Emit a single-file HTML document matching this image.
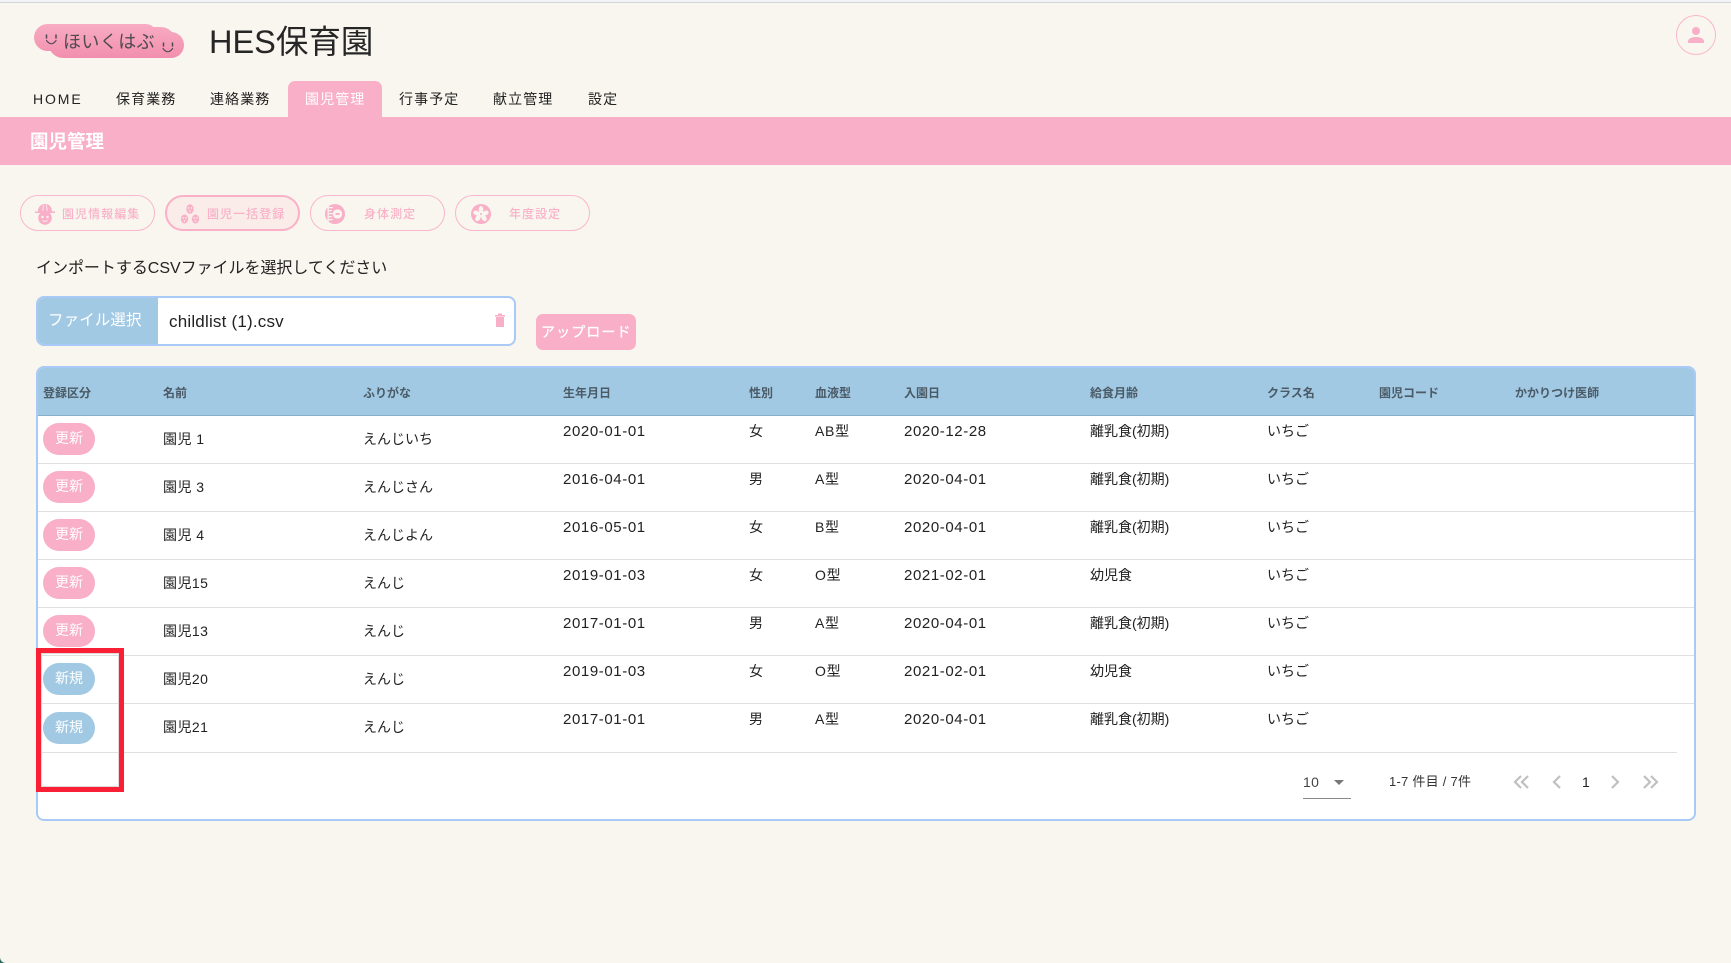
<!DOCTYPE html>
<html lang="ja"><head><meta charset="utf-8"><title>HES保育園</title>
<style>
html,body{margin:0;padding:0}
body{width:1731px;height:963px;overflow:hidden;position:relative;background:#f9f6ef;font-family:"Liberation Sans","Noto Sans CJK JP",sans-serif;color:#222}
.a,.a *{box-sizing:border-box}
.a{position:absolute;white-space:nowrap}
.nav{top:89px;height:20px;line-height:20px;font-size:14px;letter-spacing:1.1px;color:#222}
.btn{top:195px;width:135px;height:36px;border:1px solid #fab6cc;border-radius:18px}
.bt{top:205px;height:18px;line-height:18px;font-size:12px;letter-spacing:1.05px;font-weight:500;color:#f9b2c9}
.h{top:383px;height:20px;line-height:20px;font-size:12px;font-weight:700;color:#4a5a66}
.r{left:38px;width:1656px;height:48px;border-bottom:1px solid #e0e0e0}
.r span{position:absolute;height:20px;line-height:20px;font-size:14px;color:#222;white-space:nowrap}
.r .b{left:5px;top:7px;width:52px;height:32px;line-height:31px;border-radius:16px;text-align:center;color:#fff;background:#f8afc7;font-size:14px}
.r .n{background:#a2c9e3}
.r .c1{left:125px;top:13px;letter-spacing:.45px}.r .c2{left:325px;top:13px}
.r .c3{left:525px;top:6px;font-size:15px;letter-spacing:.6px}
.r .c4{left:711px;top:5px}.r .c5{left:777px;top:5px;letter-spacing:.7px}
.r .c6{left:866px;top:6px;font-size:15px;letter-spacing:.6px}
.r .c7{left:1052px;top:5px}.r .c8{left:1229px;top:5px}
</style></head><body>
<div class="a" style="left:0;top:0;width:1731px;height:2px;background:#f2f3f5"></div>
<div class="a" style="left:0;top:2px;width:1731px;height:1px;background:#d2d5dc"></div>

<svg class="a" style="left:30px;top:20px" width="160" height="42" viewBox="30 20 160 42">
<defs><linearGradient id="g" gradientUnits="userSpaceOnUse" x1="0" y1="24" x2="0" y2="58"><stop offset="0" stop-color="#f8acc3"/><stop offset="1" stop-color="#f28fae"/></linearGradient></defs>
<g fill="url(#g)"><rect x="34" y="24" width="60" height="27" rx="13.500"/><rect x="48" y="27" width="128" height="31" rx="15.500"/><rect x="60" y="24" width="96" height="20" rx="10"/><rect x="148" y="32" width="36" height="26" rx="13"/></g>
<g fill="none" stroke="#4f4a55" stroke-width="1.100" stroke-linecap="round"><path d="M46.500 40.500q4.800 6.500 9.600 0"/><path d="M163 48.500q4.800 6.500 9.600 0"/><path d="M46.500 35v3M56 35v3M163.500 43v3M172.500 43v3" stroke-width="1.500"/></g>
</svg>
<div class="a" style="left:63px;top:29px;height:26px;line-height:26px;font-size:18px;letter-spacing:.4px;color:#4f4a50">ほいくはぶ</div>
<div class="a" style="left:209px;top:21px;height:42px;line-height:42px;font-size:32.500px;color:#262626;font-weight:400">HES保育園</div>

<div class="a" style="left:1676px;top:15px;width:40px;height:40px;border:1px solid #fab6cc;border-radius:50%"></div>
<svg class="a" style="left:1686px;top:25px" width="20" height="20" viewBox="0 0 20 20"><circle cx="10" cy="6" r="4" fill="#f8afc7"/><path d="M2 18v-1.500C2 13.500 6 12 10 12s8 1.500 8 4.500V18z" fill="#f8afc7"/></svg>

<div class="a nav" style="left:33px;letter-spacing:1.900px">HOME</div>
<div class="a nav" style="left:116px">保育業務</div>
<div class="a nav" style="left:210px">連絡業務</div>
<div class="a" style="left:288px;top:81px;width:94px;height:37px;background:#f8afc7;border-radius:7px 7px 0 0"></div>
<div class="a nav" style="left:305px;color:#fff">園児管理</div>
<div class="a nav" style="left:399px">行事予定</div>
<div class="a nav" style="left:493px">献立管理</div>
<div class="a nav" style="left:588px">設定</div>

<div class="a" style="left:0;top:117px;width:1731px;height:48px;background:#f8afc7"></div>
<div class="a" style="left:30px;top:130px;height:24px;line-height:24px;font-size:18.500px;font-weight:700;color:#fff">園児管理</div>

<div class="a btn" style="left:20px"></div>
<div class="a btn" style="left:165px;border:2px solid #fab0c8;background:#f9ece9"></div>
<div class="a btn" style="left:310px"></div>
<div class="a btn" style="left:455px"></div>

<svg class="a" style="left:34px;top:203px" width="22" height="22" viewBox="0 0 22 22" fill="#f8afc7">
<path d="M11 1c4 0 7 3 7 7.500h3v1.500H1V8.500h3C4 4 7 1 11 1z"/><circle cx="11" cy="15" r="6.800"/><circle cx="8.500" cy="14" r="1.200" fill="#f9f6ef"/><circle cx="13.500" cy="14" r="1.200" fill="#f9f6ef"/><path d="M8.500 17.500q2.500 1.800 5 0" stroke="#f9f6ef" fill="none"/><path d="M9.500 2l-.8 6M12.500 2l.8 6" stroke="#f9f6ef" stroke-width=".8"/></svg>
<div class="a bt" style="left:62px">園児情報編集</div>

<svg class="a" style="left:179px;top:203px" width="22" height="22" viewBox="0 0 22 22" fill="#f8afc7">
<ellipse cx="11" cy="6" rx="3.600" ry="4.800"/><ellipse cx="5.500" cy="16" rx="3.600" ry="4.500"/><ellipse cx="16.500" cy="16" rx="3.600" ry="4.500"/>
<g fill="#f9ece9"><circle cx="9.600" cy="5" r=".9"/><circle cx="12.400" cy="5" r=".9"/><circle cx="11" cy="8" r=".9"/><circle cx="4.100" cy="15" r=".9"/><circle cx="6.900" cy="15" r=".9"/><circle cx="5.500" cy="18" r=".9"/><circle cx="15.100" cy="15" r=".9"/><circle cx="17.900" cy="15" r=".9"/><circle cx="16.500" cy="18" r=".9"/></g></svg>
<div class="a bt" style="left:207px">園児一括登録</div>

<svg class="a" style="left:324px;top:203px" width="22" height="22" viewBox="0 0 22 22" fill="#f8afc7">
<circle cx="11" cy="11" r="10"/><path d="M3.500 1.500h1.300v19H3.500z" fill="#f9f6ef"/><path d="M4.800 4h4v1.300h-4zM4.800 7h3v1.300h-3zM4.800 10h4v1.300h-4zM4.800 13h3v1.300h-3zM4.800 16h4v1.300h-4z" fill="#f9f6ef"/><rect x="9" y="6.500" width="9" height="9" rx="4" fill="#f9f6ef"/><rect x="11.500" y="10" width="4" height="2" fill="#f8afc7"/></svg>
<div class="a bt" style="left:364px">身体測定</div>

<svg class="a" style="left:470px;top:203px" width="22" height="22" viewBox="0 0 22 22">
<circle cx="11" cy="11" r="10" fill="#f8afc7"/><g fill="#f9f6ef"><ellipse cx="11" cy="6.500" rx="2.300" ry="3.500"/><ellipse cx="6.500" cy="10" rx="3.300" ry="2.300" transform="rotate(20 6.500 10)"/><ellipse cx="15.500" cy="10" rx="3.300" ry="2.300" transform="rotate(-20 15.500 10)"/><ellipse cx="8" cy="15" rx="2.300" ry="3.500" transform="rotate(35 8 15)"/><ellipse cx="14" cy="15" rx="2.300" ry="3.500" transform="rotate(-35 14 15)"/><circle cx="11" cy="11" r="3"/></g><circle cx="11" cy="11" r="1" fill="#f8afc7"/></svg>
<div class="a bt" style="left:509px">年度設定</div>

<div class="a" style="left:36px;top:258px;height:22px;line-height:22px;font-size:16px;letter-spacing:-.03px;color:#222">インポートするCSVファイルを選択してください</div>

<div class="a" style="left:36px;top:296px;width:480px;height:50px;border:2px solid #a9caf7;border-radius:8px;background:#fff;overflow:hidden"><div style="position:absolute;left:0;top:0;width:120px;height:46px;background:#a2c9e3"></div></div>
<div class="a" style="left:48px;top:310px;height:22px;line-height:22px;font-size:15.500px;letter-spacing:.1px;color:#fff">ファイル選択</div>
<div class="a" style="left:169px;top:311px;height:22px;line-height:22px;font-size:17px;letter-spacing:.2px;color:#222">childlist (1).csv</div>
<svg class="a" style="left:494px;top:313px" width="12" height="14" viewBox="0 0 12 14" fill="#f8afc7"><path d="M1 2h10v1.500H1zM4 .5h4V2H4zM2 4h8v10H2z"/></svg>

<div class="a" style="left:536px;top:314px;width:100px;height:36px;background:#f8afc7;border-radius:7px"></div>
<div class="a" style="left:541px;top:322px;height:20px;line-height:20px;font-size:14px;font-weight:400;letter-spacing:1.100px;color:#fff;-webkit-text-stroke:.3px #fff">アップロード</div>

<div class="a" style="left:36px;top:366px;width:1660px;height:455px;border:2px solid #a9caf7;border-radius:8px;background:#fff;overflow:hidden"><div style="position:absolute;left:0;top:0;width:1656px;height:48px;background:#a2c9e3;border-bottom:1px solid #84aecb"></div></div>
<div class="a h" style="left:43px">登録区分</div>
<div class="a h" style="left:163px">名前</div>
<div class="a h" style="left:363px">ふりがな</div>
<div class="a h" style="left:563px">生年月日</div>
<div class="a h" style="left:749px">性別</div>
<div class="a h" style="left:815px">血液型</div>
<div class="a h" style="left:904px">入園日</div>
<div class="a h" style="left:1090px">給食月齢</div>
<div class="a h" style="left:1267px">クラス名</div>
<div class="a h" style="left:1379px">園児コード</div>
<div class="a h" style="left:1515px">かかりつけ医師</div>

<div class="a r" style="top:416px"><span class="b">更新</span><span class="c1">園児 1</span><span class="c2">えんじいち</span><span class="c3">2020-01-01</span><span class="c4">女</span><span class="c5">AB型</span><span class="c6">2020-12-28</span><span class="c7">離乳食(初期)</span><span class="c8">いちご</span></div>
<div class="a r" style="top:464px"><span class="b">更新</span><span class="c1">園児 3</span><span class="c2">えんじさん</span><span class="c3">2016-04-01</span><span class="c4">男</span><span class="c5">A型</span><span class="c6">2020-04-01</span><span class="c7">離乳食(初期)</span><span class="c8">いちご</span></div>
<div class="a r" style="top:512px"><span class="b">更新</span><span class="c1">園児 4</span><span class="c2">えんじよん</span><span class="c3">2016-05-01</span><span class="c4">女</span><span class="c5">B型</span><span class="c6">2020-04-01</span><span class="c7">離乳食(初期)</span><span class="c8">いちご</span></div>
<div class="a r" style="top:560px"><span class="b">更新</span><span class="c1">園児15</span><span class="c2">えんじ</span><span class="c3">2019-01-03</span><span class="c4">女</span><span class="c5">O型</span><span class="c6">2021-02-01</span><span class="c7">幼児食</span><span class="c8">いちご</span></div>
<div class="a r" style="top:608px"><span class="b">更新</span><span class="c1">園児13</span><span class="c2">えんじ</span><span class="c3">2017-01-01</span><span class="c4">男</span><span class="c5">A型</span><span class="c6">2020-04-01</span><span class="c7">離乳食(初期)</span><span class="c8">いちご</span></div>
<div class="a r" style="top:656px"><span class="b n">新規</span><span class="c1">園児20</span><span class="c2">えんじ</span><span class="c3">2019-01-03</span><span class="c4">女</span><span class="c5">O型</span><span class="c6">2021-02-01</span><span class="c7">幼児食</span><span class="c8">いちご</span></div>
<div class="a r" style="top:704px;width:1639px;height:49px"><span class="b n" style="top:8px">新規</span><span class="c1">園児21</span><span class="c2">えんじ</span><span class="c3">2017-01-01</span><span class="c4">男</span><span class="c5">A型</span><span class="c6">2020-04-01</span><span class="c7">離乳食(初期)</span><span class="c8">いちご</span></div>

<div class="a" style="left:1303px;top:772px;height:20px;line-height:20px;font-size:14px;letter-spacing:.3px;color:#444">10</div>
<svg class="a" style="left:1334px;top:780px" width="10" height="5" viewBox="0 0 10 5"><path d="M0 0h10L5 5z" fill="#777"/></svg>
<div class="a" style="left:1303px;top:798px;width:48px;height:1px;background:#8a8a8a"></div>
<div class="a" style="left:1389px;top:772px;height:20px;line-height:20px;font-size:13px;letter-spacing:.25px;color:#333">1-7 件目 / 7件</div>
<svg class="a" style="left:1510px;top:772px" width="152" height="20" viewBox="0 0 152 20" fill="none" stroke="#c0c0c0" stroke-width="2.200">
<path d="M11 4l-6 6 6 6M18 4l-6 6 6 6"/><path d="M50 4l-6 6 6 6"/><path d="M102 4l6 6-6 6"/><path d="M134 4l6 6-6 6M141 4l6 6-6 6"/></svg>
<div class="a" style="left:1582px;top:772px;height:20px;line-height:20px;font-size:14px;color:#222">1</div>

<div class="a" style="left:36px;top:648px;width:88px;height:144px;border:5px solid #f91f35;box-shadow:inset 0 0 0 1px #e4d8da"></div>
<svg class="a" style="left:0;top:955px" width="8" height="8" viewBox="0 0 8 8"><path d="M0 2C0 5 2 8 6 8H0z" fill="#2b6b5e"/></svg>
</body></html>
